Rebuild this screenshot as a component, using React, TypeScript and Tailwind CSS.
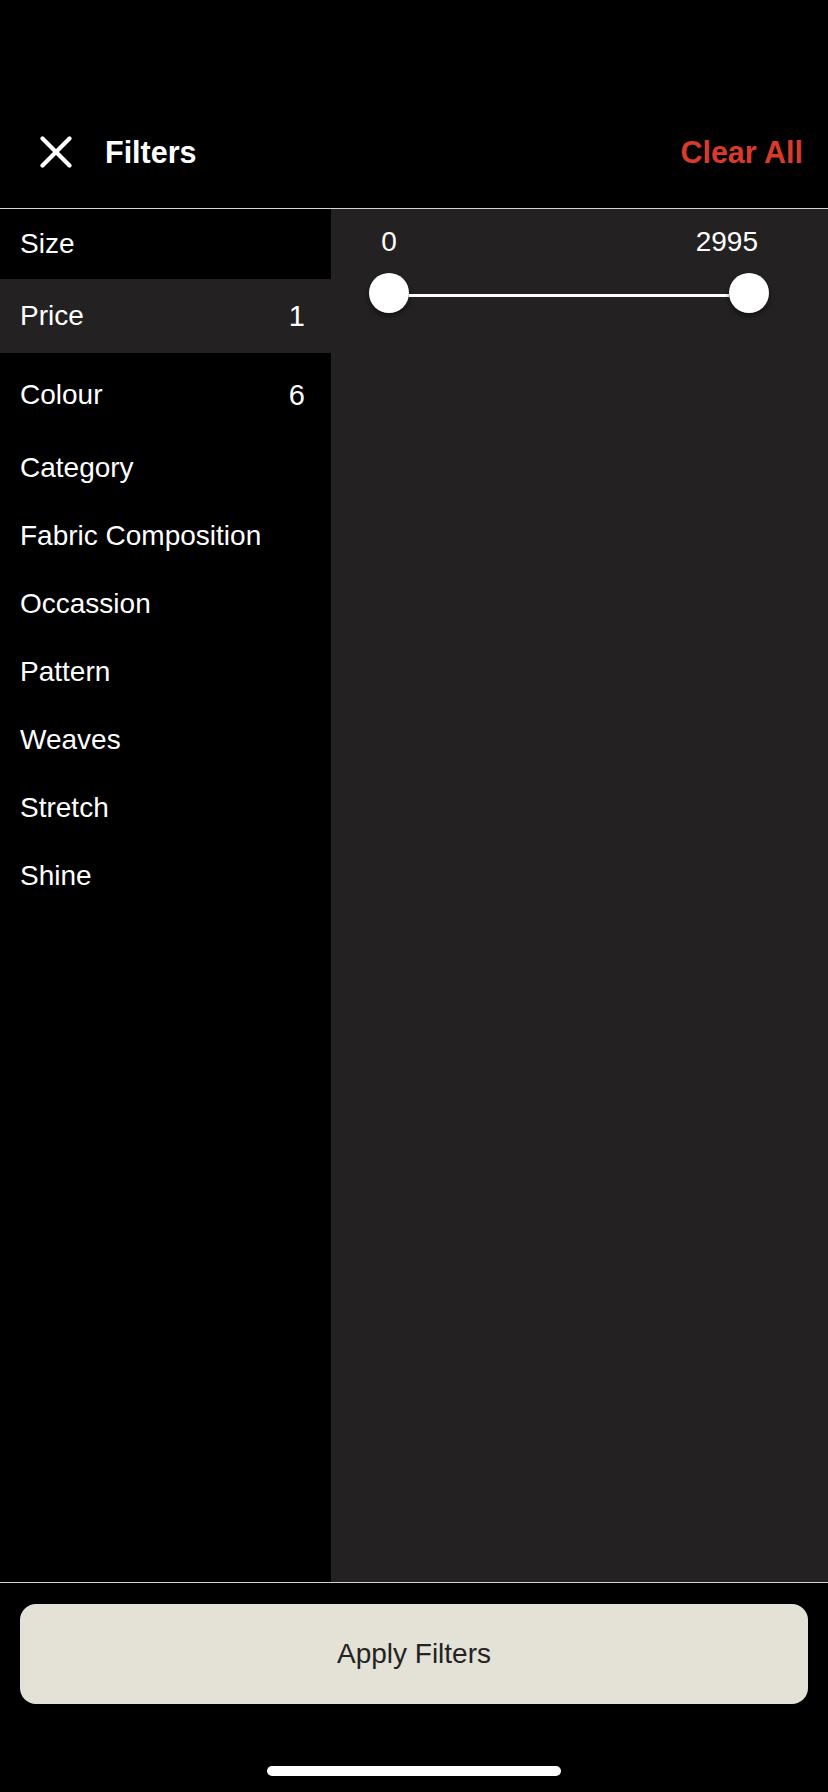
import { ReactNode } from "react";

type FilterItem = {
  label: string;
  count?: number;
  height: string;
  active?: boolean;
};

const FILTERS: FilterItem[] = [
  { label: "Size", height: "h-[70px]" },
  { label: "Price", count: 1, height: "h-[74px]", active: true },
  { label: "Colour", count: 6, height: "h-[81px] pt-[3px]" },
  { label: "Category", height: "h-[68px]" },
  { label: "Fabric Composition", height: "h-[68px]" },
  { label: "Occassion", height: "h-[68px]" },
  { label: "Pattern", height: "h-[68px]" },
  { label: "Weaves", height: "h-[68px]" },
  { label: "Stretch", height: "h-[68px]" },
  { label: "Shine", height: "h-[68px]" },
];

const CloseIcon = () => (
  <svg width="32" height="32" viewBox="0 0 32 32" fill="none">
    <path
      d="M2.5 2.5 L29.5 29.5 M29.5 2.5 L2.5 29.5"
      stroke="white"
      strokeWidth="4.2"
      strokeLinecap="round"
    />
  </svg>
);

const Thumb = () => (
  <div className="w-[40px] h-[40px] rounded-full bg-white shadow-[0_3px_5px_rgba(0,0,0,0.45)] shrink-0" />
);

const FilterRow = ({ item }: { item: FilterItem }) => (
  <div
    className={`flex items-center justify-between pl-[20px] pr-[26px] ${item.height} ${
      item.active ? "bg-[#232122]" : ""
    }`}
  >
    <span>{item.label}</span>
    {item.count !== undefined && <span className="text-[29px]">{item.count}</span>}
  </div>
);

const Panel = ({ children }: { children: ReactNode }) => (
  <div className="flex-1 bg-[#232122]">{children}</div>
);

export default function App() {
  return (
    <div className="w-[828px] h-[1792px] bg-black text-white flex flex-col font-['Liberation_Sans',Arial,sans-serif] overflow-hidden">
      {/* Header */}
      <header className="pt-[96px] border-b border-[#d4d4d4]">
        <div className="h-[112px] flex items-center pl-[40px] pr-[25px]">
          <CloseIcon />
          <h1 className="ml-[33px] text-[30.5px] font-bold leading-none">Filters</h1>
          <button className="ml-auto text-[30.5px] font-bold leading-none text-[#d93a2c]">
            Clear All
          </button>
        </div>
      </header>

      {/* Body */}
      <div className="flex-1 flex min-h-0">
        <nav className="w-[331px] shrink-0 text-[28px] leading-[34px]">
          {FILTERS.map((item) => (
            <FilterRow key={item.label} item={item} />
          ))}
        </nav>

        <Panel>
          <div className="pt-[16px] pl-[38px] pr-[59px]">
            <div className="flex justify-between text-[28px] leading-[34px]">
              <span className="w-[40px] text-center">0</span>
              <span className="mr-[11px]">2995</span>
            </div>
            <div className="mt-[14px] flex items-center">
              <Thumb />
              <div className="flex-1 h-[3px] mt-[4px] bg-white" />
              <Thumb />
            </div>
          </div>
        </Panel>
      </div>

      {/* Footer */}
      <footer className="border-t border-[#d4d4d4] h-[210px] shrink-0 flex flex-col px-[20px] pt-[21px]">
        <button className="h-[100px] w-full rounded-[16px] bg-[#e4e2d6] text-[#232323] text-[28px]">
          Apply Filters
        </button>
        <div className="mt-[62px] self-center w-[294px] h-[10px] rounded-full bg-white" />
      </footer>
    </div>
  );
}
